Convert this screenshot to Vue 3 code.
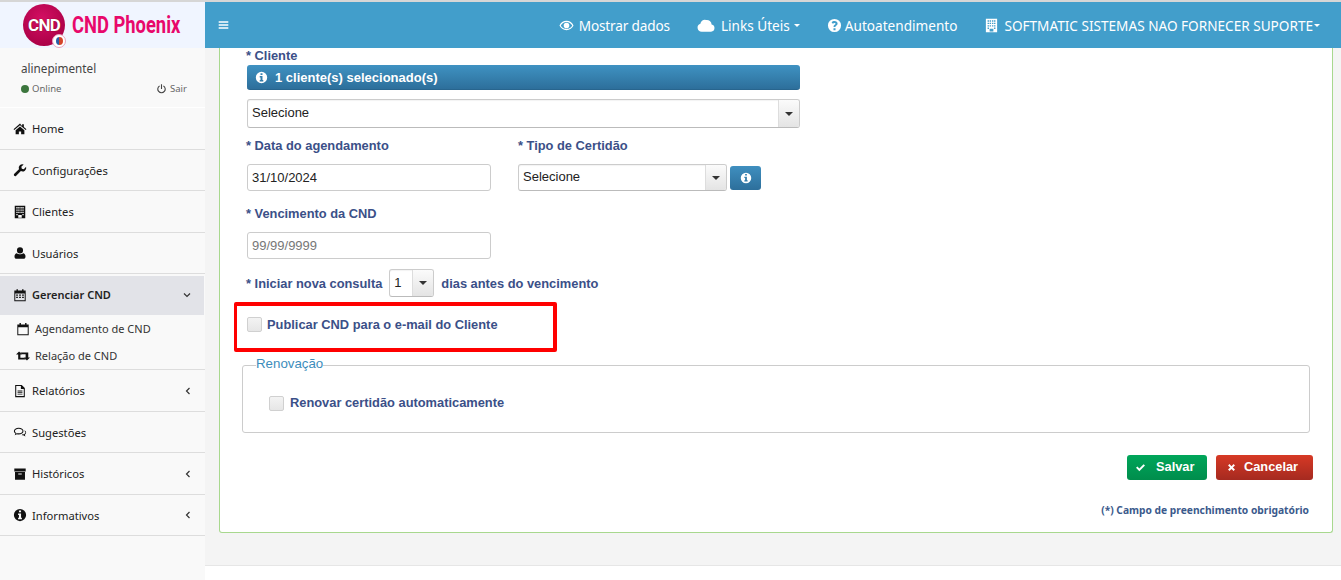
<script setup>
const icons = {
  home: 'M8 1.800.6 8.200l.9 1L8 3.600l6.500 5.600.9-1-3-2.600V2.500h-2v2.200zM3 9.300V14h3.700v-3.200h2.600V14H13V9.300L8 5z',
  wrench: 'M15 4.400l-2.700 2.700-2.200-.6-.6-2.200L12.200 1.600A4.200 4.200 0 0 0 6.800 7L1.200 12.600a1.600 1.600 0 0 0 2.200 2.200L9 9.200a4.200 4.200 0 0 0 6-4.800z',
  building: 'M2 .8h12V15.200H2zM3.800 2.400h1.500v1.500H3.800zM6 2.400h1.500v1.500H6zM8.500 2.400H10v1.500H8.500zM10.700 2.400h1.500v1.500h-1.500zM3.800 5h1.500v1.500H3.800zM6 5h1.500v1.500H6zM8.500 5H10v1.500H8.500zM10.700 5h1.500v1.500h-1.500zM3.800 7.600h1.500v1.500H3.800zM6 7.600h1.500v1.500H6zM8.500 7.600H10v1.500H8.500zM10.700 7.600h1.500v1.500h-1.500zM3.800 10.200h1.500v1.500H3.800zM10.700 10.200h1.500v1.500h-1.500zM6 11.500h4v3H6z',
  user: 'M8 1.500a3.500 3.500 0 1 1 0 7A3.500 3.500 0 0 1 8 1.500zM4.400 8.200C5.300 9 6.600 9.500 8 9.500s2.700-.5 3.600-1.300c1.700.3 2.700 1.700 2.700 4 0 1.500-1 2.300-2.300 2.300H4c-1.300 0-2.300-.8-2.300-2.300 0-2.300 1-3.700 2.700-4z',
  calendar: 'M1.500 2.800H4V1.300h1.600v1.500h4.800V1.300H12v1.500h2.500V15h-13zM2.600 6.300V13.900h10.800V6.300zM3.600 7.300h2v1.500h-2zM7 7.300h2v1.500H7zM10.400 7.300h2v1.500h-2zM3.600 10h2v1.500h-2zM7 10h2v1.500H7zM10.400 10h2v1.500h-2z',
  calendarO: 'M1.500 2.800H4V1H5.600v1.800h4.800V1H12v1.800h2.500V15h-13zM2.600 6V13.900h10.800V6z',
  retweet: 'M3.500 2.800 7 6.300H5V10h4.500l2 2H2.500V6.300H0zM12.500 13.200 9 9.700h2V6H6.500l-2-2H14v5.700h2z',
  file: 'M2.500 1h7.500l3.500 3.500V15h-11zM3.700 2.200v11.600h8.600V5.700H9V2.200zM5.200 7.500h5.600v1H5.200zM5.200 9.300h5.600v1H5.200zM5.200 11.100h5.600v1H5.200z',
  comments: 'M6.500 3C3.500 3 1 4.600 1 6.800c0 1.200.7 2.200 1.800 3l-.8 2 2.500-1.200c.6.2 1.300.2 2 .2 3 0 5.500-1.700 5.500-4S9.500 3 6.500 3zM6.500 4.200c-2.500 0-4.300 1.200-4.300 2.600 0 1 .7 1.800 1.800 2.300l-.3.8 1.200-.6c.5.100 1 .2 1.600.2 2.500 0 4.300-1.200 4.300-2.700S9 4.200 6.500 4.200zM13 6c1.200.6 2 1.500 2 2.700 0 1-.6 1.800-1.500 2.400l.7 1.900-2.600-1.300c-.6.100-1 .1-1.600 0l.6-1c2 .2 3.600-.8 3.600-2 0-.5-.3-1-.7-1.400z',
  archive: 'M1.500 1.800h13v3.200h-13zM2.300 5.800h11.400V14.500H2.300zM6 7.500h4v1.200H6z',
  info: 'M8 1a7 7 0 1 0 0 14A7 7 0 0 0 8 1zM6.800 2.800h2.400v2H6.800zM5.800 6.200h3.400V11h1v1.800H5.800V11h1V8h-1z',
  eye: 'M8 3C4.500 3 1.800 5.200.5 8c1.300 2.800 4 5 7.500 5s6.200-2.200 7.500-5C14.200 5.200 11.500 3 8 3zM8 4.200c2.700 0 5 1.600 6.100 3.800-1.100 2.200-3.400 3.800-6.100 3.800S3 10.200 1.900 8C3 5.800 5.300 4.200 8 4.200zM8 5a3 3 0 1 0 0 6 3 3 0 0 0 0-6z',
  cloud: 'M4.200 14A3.700 3.700 0 0 1 3 6.800 3.800 3.800 0 0 1 8.200 3.600 4.200 4.200 0 0 1 13 7.500 3.300 3.300 0 0 1 12.500 14z',
  question: 'M8 1a7 7 0 1 0 0 14A7 7 0 0 0 8 1zM6.900 11h2.200v2H6.900zM8 3.200c1.900 0 3.300 1 3.300 2.700 0 1.300-.8 1.900-1.500 2.400-.6.400-.8.600-.8 1.100v.3H7v-.6c0-1 .5-1.500 1.200-2 .6-.4.900-.7.900-1.100 0-.5-.5-.8-1.100-.8-.7 0-1.200.3-1.700.9L4.900 4.700C5.700 3.700 6.700 3.200 8 3.200z',
  power: 'M7.200 1h1.600v7H7.200zM4.800 2.800l.9 1.300a4.600 4.600 0 1 0 4.600 0l.9-1.300a6.200 6.200 0 1 1-6.400 0z',
  check: 'M1.500 8.500 3.500 6.500 6.300 9.300 12.500 3.200 14.500 5.200 6.300 13.400z',
  times: 'M3 5 5 3 8 6 11 3 13 5 10 8 13 11 11 13 8 10 5 13 3 11 6 8z',
  bars: 'M1 2.500h14v2.400H1zM1 6.800h14v2.400H1zM1 11.100h14v2.400H1z',
};

const before = [
  { label: 'Home', icon: 'home' },
  { label: 'Configurações', icon: 'wrench' },
  { label: 'Clientes', icon: 'building' },
  { label: 'Usuários', icon: 'user' },
];
const subs = [
  { label: 'Agendamento de CND', icon: 'calendarO' },
  { label: 'Relação de CND', icon: 'retweet' },
];
const after = [
  { label: 'Relatórios', icon: 'file', arrow: true },
  { label: 'Sugestões', icon: 'comments' },
  { label: 'Históricos', icon: 'archive', arrow: true },
  { label: 'Informativos', icon: 'info', arrow: true },
];
</script>

<template>
  <div class="page">
    <aside class="side">
      <div class="logo">
        <div class="badge">
          <span class="badge-text">CND</span>
          <span class="badge-dot"><i></i></span>
        </div>
        <span class="brand">CND Phoenix</span>
      </div>
      <div class="panel">
        <div class="uname">alinepimentel</div>
        <div class="ustate">
          <span class="online"><i class="dot"></i>Online</span>
          <span class="exit">
            <svg class="ic10" viewBox="0 0 16 16"><path fill-rule="evenodd" :d="icons.power" /></svg>Sair
          </span>
        </div>
      </div>
      <nav class="menu">
        <a v-for="m in before" :key="m.label" class="item">
          <svg class="ic" viewBox="0 0 16 16"><path fill-rule="evenodd" :d="icons[m.icon]" /></svg>
          <span>{{ m.label }}</span>
        </a>
        <div class="group">
          <a class="item active">
            <svg class="ic" viewBox="0 0 16 16"><path fill-rule="evenodd" :d="icons.calendar" /></svg>
            <span>Gerenciar CND</span>
            <svg class="chev" viewBox="0 0 10 10"><path d="M2 3.500 5 6.500 8 3.500" /></svg>
          </a>
          <a v-for="s in subs" :key="s.label" class="sub">
            <svg class="ic" viewBox="0 0 16 16"><path fill-rule="evenodd" :d="icons[s.icon]" /></svg>
            <span>{{ s.label }}</span>
          </a>
        </div>
        <a v-for="m in after" :key="m.label" class="item">
          <svg class="ic" viewBox="0 0 16 16"><path fill-rule="evenodd" :d="icons[m.icon]" /></svg>
          <span>{{ m.label }}</span>
          <svg v-if="m.arrow" class="chev" viewBox="0 0 10 10"><path d="M6.500 2 3.500 5 6.500 8" /></svg>
        </a>
      </nav>
    </aside>

    <div class="right">
      <header class="top">
        <svg class="bars" viewBox="0 0 16 16"><path :d="icons.bars" /></svg>
        <div class="topnav">
          <a class="tl t1"><svg class="tic" viewBox="0 0 16 16"><path fill-rule="evenodd" :d="icons.eye" /></svg>Mostrar dados</a>
          <a class="tl t2"><svg class="tic cloud" viewBox="0 0 16 16"><path :d="icons.cloud" /></svg>Links Úteis<i class="caret"></i></a>
          <a class="tl t3"><svg class="tic q" viewBox="0 0 16 16"><path fill-rule="evenodd" :d="icons.question" /></svg>Autoatendimento</a>
          <a class="tl t4"><svg class="tic b" viewBox="0 0 16 16"><path fill-rule="evenodd" :d="icons.building" /></svg>SOFTMATIC SISTEMAS NAO FORNECER SUPORTE<i class="caret tight"></i></a>
        </div>
      </header>

      <main class="content">
        <section class="card">
          <div class="lbl off l-cliente">* Cliente</div>
          <div class="selected">
            <svg class="ic-w" viewBox="0 0 16 16"><path fill-rule="evenodd" :d="icons.info" /></svg>
            1 cliente(s) selecionado(s)
          </div>
          <div class="sel wide"><span>Selecione</span><b class="arrow"><i></i></b></div>

          <div class="two">
            <div class="col c1">
              <div class="lbl off">* Data do agendamento</div>
              <input class="inp" value="31/10/2024" />
            </div>
            <div class="col">
              <div class="lbl">* Tipo de Certidão</div>
              <div class="tipo">
                <div class="sel mid"><span>Selecione</span><b class="arrow"><i></i></b></div>
                <button class="btn-info">
                  <svg viewBox="0 0 16 16"><path fill-rule="evenodd" :d="icons.info" /></svg>
                </button>
              </div>
            </div>
          </div>

          <div class="lbl off l-venc">* Vencimento da CND</div>
          <input class="inp" placeholder="99/99/9999" />

          <div class="inline">
            <span class="lbl off">* Iniciar nova consulta</span>
            <div class="sel tiny"><span>1</span><b class="arrow"><i></i></b></div>
            <span class="lbl">dias antes do vencimento</span>
          </div>

          <div class="redbox">
            <label class="chk"><i class="box"></i><span class="lbl">Publicar CND para o e-mail do Cliente</span></label>
          </div>

          <fieldset class="fs">
            <legend>Renovação</legend>
            <label class="chk"><i class="box"></i><span class="lbl">Renovar certidão automaticamente</span></label>
          </fieldset>

          <div class="actions">
            <button class="btn green"><svg viewBox="0 0 16 16"><path :d="icons.check" /></svg>Salvar</button>
            <button class="btn red"><svg viewBox="0 0 16 16"><path :d="icons.times" /></svg>Cancelar</button>
          </div>
          <p class="note">(*) Campo de preenchimento obrigatório</p>
        </section>
      </main>
      <footer class="foot"></footer>
    </div>
  </div>
</template>

<style>
html, body { margin: 0; overflow: hidden; background: #fff; }
</style>

<style scoped>
* { box-sizing: border-box; }
.page {
  width: 1341px; height: 580px; display: flex; overflow: hidden;
  border-top: 2px solid #d6d6d6;
  font-family: "Noto Sans", sans-serif;
}
.side { width: 205px; flex: none; background: #f9f9f9; display: flex; flex-direction: column; }
.logo { height: 46px; background: #f0f5ff; position: relative; display: flex; align-items: center; padding-left: 23px; }
.badge {
  width: 42px; height: 42px; border-radius: 50%; position: relative; flex: none;
  background: radial-gradient(circle at 45% 35%, #d40f63, #a90045 80%);
  display: flex; align-items: center; justify-content: center;
}
.badge-text { font: 700 17px/1 "Roboto", sans-serif; color: #fff; letter-spacing: -0.8px; text-shadow: 0 0 1px #600; }
.badge-dot {
  position: absolute; right: -1px; bottom: -2px; width: 14px; height: 14px; border-radius: 50%;
  background: #fff; border: 1px solid #e9a3bd; display: flex; align-items: center; justify-content: center;
}
.badge-dot i { width: 7px; height: 8px; border-radius: 50%; background: linear-gradient(90deg, #2a5da8 50%, #d4442a 50%); }
.brand {
  font: 700 24px/1 "Roboto", sans-serif; color: #e8086b; margin-left: 7px; white-space: nowrap;
  transform: scaleX(0.765); transform-origin: left center;
}
.panel { height: 60px; padding: 13px 18px 0 21px; border-bottom: 1px solid #fff; }
.uname { font-size: 11.7px; line-height: 14px; color: #444; }
.ustate { display: flex; justify-content: space-between; margin-top: 8px; font-size: 9.5px; line-height: 12px; color: #666; }
.online, .exit { display: flex; align-items: center; }
.dot { width: 8px; height: 8px; border-radius: 50%; background: #3c763d; margin-right: 3px; }
.ic10 { width: 11px; height: 12px; margin-right: 3px; fill: #444; }
.menu { display: flex; flex-direction: column; }
.item {
  height: 41.5px; display: flex; align-items: center; padding: 0.500px 13px 0; border-bottom: 1px solid #ddd;
  font-size: 11.2px; color: #222;
}
.ic { width: 14px; height: 14px; fill: #111; flex: none; margin-right: 5px; }
.chev { width: 10px; height: 10px; margin-left: auto; margin-right: -1px; fill: none; stroke: #333; stroke-width: 1.200; }
.item.active { background: #e2e3e8; font-weight: 600; font-size: 11px; height: 39px; margin-top: 2px; padding-bottom: 2px; border-bottom: 0; margin-right: 1px; }
.group { border-bottom: 1px solid #ddd; }
.sub { height: 27px; display: flex; align-items: center; padding-left: 16px; font-size: 11px; color: #333; }
.sub .ic { margin-right: 5px; }

.right { flex: 1; min-width: 0; display: flex; flex-direction: column; background: #f4f4f4; }
.top { height: 46px; flex: none; background: #429ecb; display: flex; align-items: center; padding-left: 13px; color: #fff; }
.bars { width: 11px; height: 12px; fill: #fff; }
.topnav { margin-left: auto; display: flex; align-items: center; font-size: 13.6px; white-space: nowrap; padding-right: 21px; }
.tl { display: flex; align-items: center; }
.t1, .t2, .t3 { margin-right: 27px; }
.t1 { letter-spacing: -0.15px; }
.tic { width: 15px; height: 15px; fill: #fff; margin-right: 5px; }
.cloud { width: 18px; height: 18px; margin-right: 6px; }
.q { margin-right: 3px; }
.b { width: 15px; height: 17px; margin-right: 5px; }
.caret { width: 0; height: 0; margin-left: 4px; border-left: 3.5px solid transparent; border-right: 3.5px solid transparent; border-top: 3.5px solid #fff; }
.caret.tight { margin-left: 1px; }

.content { flex: 1; padding: 0 8px 0 14px; min-height: 0; }
.card {
  height: 485px; background: #fff; border: 1px solid #a8d88e; border-top: 0; border-radius: 0 0 3px 3px;
  padding: 0 22px 0 27px;
}
.lbl { font: 700 12.85px/16px "Liberation Sans", Arial, sans-serif; color: #3b5088; }
.off { margin-left: -1px; }
.l-cliente { height: 17px; }
.selected {
  width: 553px; height: 25px; border-radius: 3px; color: #fff; display: flex; align-items: center; padding-left: 8px;
  font: 700 13px/1 "Liberation Sans", Arial, sans-serif;
  background: linear-gradient(#3f92c2, #2d6f9b); border-bottom: 1px solid #28658e;
}
.ic-w { width: 13px; height: 13px; fill: #fff; margin-right: 7px; }
.sel {
  display: flex; align-items: center; justify-content: space-between; background: #fff; border: 1px solid #ccc; border-bottom-color: #bbb;
  border-radius: 3px; font: 13px/1 "Liberation Sans", Arial, sans-serif; color: #222; padding-left: 4px;
  box-shadow: inset 0 1px 1px rgba(0,0,0,.05); overflow: hidden;
}
.sel > span { padding-bottom: 2px; }
.sel.wide { width: 553px; height: 29px; margin-top: 9px; }
.sel.mid { width: 209px; height: 27px; }
.sel.tiny { width: 45px; height: 28px; margin: 0 7px 0 7px; }
.arrow {
  width: 21px; height: 100%; flex: none; display: flex; align-items: center; justify-content: center;
  background: linear-gradient(#fbfbfb, #e4e4e4); border-left: 1px solid #ddd;
}
.arrow i { width: 0; height: 0; border-left: 4px solid transparent; border-right: 4px solid transparent; border-top: 4px solid #333; }
.two { display: flex; margin-top: 10px; }
.col { display: flex; flex-direction: column; }
.c1 { width: 271px; }
.col .lbl { height: 26px; }
.tipo { display: flex; align-items: center; }
.btn-info {
  width: 31px; height: 24px; margin-left: 3px; border: 0; border-radius: 3px; padding: 0;
  background: linear-gradient(#3f8fbf, #2d6f9b); display: flex; align-items: center; justify-content: center;
}
.btn-info svg { width: 12px; height: 12px; fill: #fff; }
.inp {
  display: block; width: 244px; height: 27px; border: 1px solid #ccc; border-radius: 3px; background: #fff; padding: 0 4px;
  font: 13px "Liberation Sans", Arial, sans-serif; color: #222; outline: none;
}
.inp::placeholder { color: #777; opacity: 1; }
.l-venc { margin-top: 15px; height: 26px; }
.inline { display: flex; align-items: center; margin-top: 10px; }
.inline > .lbl { padding-top: 2px; }
.redbox {
  width: 323px; height: 50px; margin: 5px 0 0 -13px; border: 4px solid #f00; border-left-width: 3px; border-radius: 2px;
  display: flex; align-items: center; padding: 0 0 5px 10px;
}
.chk { display: flex; align-items: center; }
.box {
  width: 15px; height: 15px; margin-right: 5px; border: 1px solid #d0d0d0; border-radius: 2px;
  background: linear-gradient(#f3f3f3, #e6e6e6);
}
.fs {
  width: 1068px; height: 68px; margin: 13px 0 0 -5px; padding: 8px 0 0 26px; border: 1px solid #ccc; border-radius: 3px;
  position: relative; display: flex; align-items: center;
}
.fs .box { margin-right: 6px; }
.fs legend {
  position: absolute; top: -10px; left: 13px; padding: 0; background: #fff;
  font: 13.300px/16px "Liberation Sans", Arial, sans-serif; color: #3c8dbc;
}
.actions { display: flex; justify-content: flex-end; gap: 9px; margin: 22px -3px 0 0; }
.btn {
  height: 25px; border: 0; border-radius: 3px; color: #fff; display: flex; align-items: center; padding: 0;
  font: 700 12.8px/1 "Liberation Sans", Arial, sans-serif;
}
.btn svg { width: 11px; height: 11px; fill: #fff; }
.green { width: 80px; padding-left: 8px; background: linear-gradient(#00a65a, #008d4c); }
.green svg { margin-right: 10px; }
.red { width: 97px; padding-left: 10px; background: linear-gradient(#d73925, #a52a20); }
.red svg { margin-right: 7px; }
.note { margin: 23px 1px 0 0; text-align: right; font: 700 10.25px/14px "Noto Sans", sans-serif; color: #3b5a8c; }
.foot { height: 15px; flex: none; background: #fff; border-top: 1px solid #e6e6e6; }
</style>
